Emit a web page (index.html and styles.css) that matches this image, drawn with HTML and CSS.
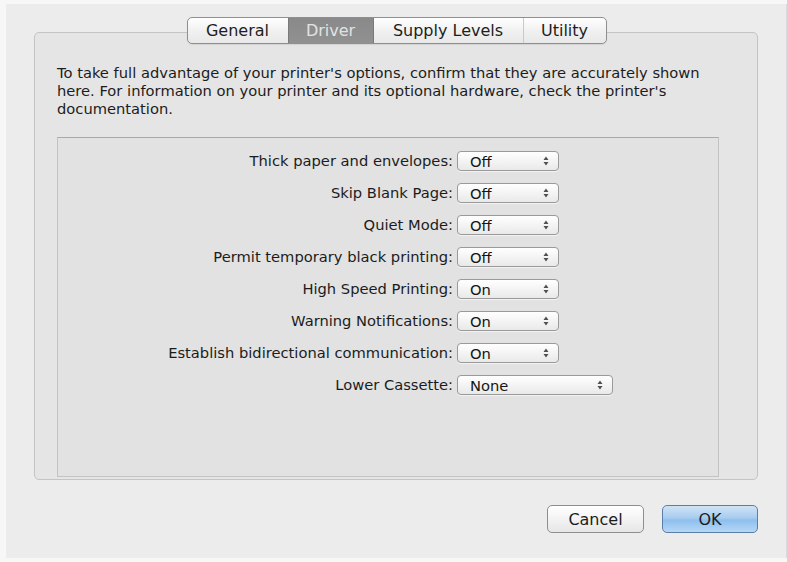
FILE: index.html
```html
<!DOCTYPE html>
<html>
<head>
<meta charset="utf-8">
<link rel="stylesheet" href="styles.css">
</head>
<body>
<div class="window">
  <div class="tabs">
    <div class="tab t-general">General</div>
    <div class="tab t-driver sel">Driver</div>
    <div class="tab t-supply">Supply Levels</div>
    <div class="tab t-utility">Utility</div>
  </div>
  <div class="group">
    <p class="intro">To take full advantage of your printer's options, confirm that they are accurately shown here. For information on your printer and its optional hardware, check the printer's documentation.</p>
    <div class="panel">
      <div class="opts">
        <span class="lbl">Thick paper and envelopes:</span>
        <div class="popup"><span>Off</span><svg width="6" height="10" viewBox="0 0 6 10"><path d="M0.5 4 L3 0.5 L5.5 4 Z M0.5 6 L3 9.5 L5.5 6 Z" fill="#505050"/></svg></div>
        <span class="lbl">Skip Blank Page:</span>
        <div class="popup"><span>Off</span><svg width="6" height="10" viewBox="0 0 6 10"><path d="M0.5 4 L3 0.5 L5.5 4 Z M0.5 6 L3 9.5 L5.5 6 Z" fill="#505050"/></svg></div>
        <span class="lbl">Quiet Mode:</span>
        <div class="popup"><span>Off</span><svg width="6" height="10" viewBox="0 0 6 10"><path d="M0.5 4 L3 0.5 L5.5 4 Z M0.5 6 L3 9.5 L5.5 6 Z" fill="#505050"/></svg></div>
        <span class="lbl">Permit temporary black printing:</span>
        <div class="popup"><span>Off</span><svg width="6" height="10" viewBox="0 0 6 10"><path d="M0.5 4 L3 0.5 L5.5 4 Z M0.5 6 L3 9.5 L5.5 6 Z" fill="#505050"/></svg></div>
        <span class="lbl">High Speed Printing:</span>
        <div class="popup"><span>On</span><svg width="6" height="10" viewBox="0 0 6 10"><path d="M0.5 4 L3 0.5 L5.5 4 Z M0.5 6 L3 9.5 L5.5 6 Z" fill="#505050"/></svg></div>
        <span class="lbl">Warning Notifications:</span>
        <div class="popup"><span>On</span><svg width="6" height="10" viewBox="0 0 6 10"><path d="M0.5 4 L3 0.5 L5.5 4 Z M0.5 6 L3 9.5 L5.5 6 Z" fill="#505050"/></svg></div>
        <span class="lbl">Establish bidirectional communication:</span>
        <div class="popup"><span>On</span><svg width="6" height="10" viewBox="0 0 6 10"><path d="M0.5 4 L3 0.5 L5.5 4 Z M0.5 6 L3 9.5 L5.5 6 Z" fill="#505050"/></svg></div>
        <span class="lbl">Lower Cassette:</span>
        <div class="popup wide"><span>None</span><svg width="6" height="10" viewBox="0 0 6 10"><path d="M0.5 4 L3 0.5 L5.5 4 Z M0.5 6 L3 9.5 L5.5 6 Z" fill="#505050"/></svg></div>
      </div>
    </div>
  </div>
  <div class="buttons">
    <button class="btn cancel">Cancel</button>
    <button class="btn ok">OK</button>
  </div>
</div>
</body>
</html>
```
FILE: styles.css
```css
html, body {
  margin: 0;
  padding: 0;
  background: #f7f7f7;
  font-family: "DejaVu Sans", "Liberation Sans", sans-serif;
  color: #1c1c1c;
}
.window {
  margin: 4px 0 0 6px;
  width: 781px;
  height: 554px;
  box-sizing: border-box;
  background: #ececec;
  border-right: 1px solid #dcdcdc;
  padding: 13px 28px 0 28px;
  display: flex;
  flex-direction: column;
}
.tabs {
  align-self: center;
  position: relative;
  z-index: 1;
  display: flex;
  height: 27px;
  box-sizing: border-box;
  border: 1px solid #8f8f8f;
  border-radius: 5px;
  overflow: hidden;
  background: linear-gradient(#ffffff, #f1f1f1 50%, #e8e8e8);
  box-shadow: 0 1px 1px rgba(0,0,0,0.08);
  margin-left: 1px;
}
.tab {
  font-size: 16px;
  line-height: 25px;
  text-align: center;
  color: #1e1e1e;
  border-left: 1px solid #c9c9c9;
  box-sizing: border-box;
}
.t-general { width: 100px; border-left: none; }
.t-driver { width: 85px; }
.t-supply { width: 150px; }
.t-utility { width: 83px; }
.tab.sel {
  background: linear-gradient(#898989, #919191);
  color: #e2e2e2;
  border-left: 1px solid #7a7a7a;
}
.tab.sel + .tab { border-left: 1px solid #7a7a7a; }
.group {
  margin-top: -12px;
  height: 448px;
  box-sizing: border-box;
  border: 1px solid #c4c4c4;
  border-radius: 5px;
  background: #e5e5e5;
  padding: 31px 38px 0 22px;
}
.intro {
  margin: 0 0 19px 0;
  font-size: 14.7px;
  line-height: 18px;
  color: #1c1c1c;
}
.panel {
  height: 340px;
  box-sizing: border-box;
  border: 1px solid #c3c3c3;
  border-top-color: #a9a9a9;
  background: #e2e2e2;
  padding-top: 13px;
}
.opts {
  display: grid;
  grid-template-columns: 395px auto;
  column-gap: 4px;
  row-gap: 12px;
  align-items: center;
}
.lbl {
  justify-self: end;
  font-size: 14.7px;
  line-height: 20px;
  white-space: nowrap;
}
.popup {
  justify-self: start;
  width: 102px;
  height: 20px;
  box-sizing: border-box;
  border: 1px solid #9a9a9a;
  border-radius: 4px;
  background: linear-gradient(#ffffff, #f4f4f4 50%, #e9e9e9);
  box-shadow: 0 1px 0 rgba(255,255,255,0.6);
  display: flex;
  align-items: center;
  justify-content: space-between;
  padding: 0 9px 0 12px;
  font-size: 14.7px;
  color: #151515;
}
.popup.wide { width: 156px; }
.buttons {
  margin-top: 25px;
  display: flex;
  justify-content: flex-end;
  gap: 18px;
}
.btn {
  font-family: "DejaVu Sans", "Liberation Sans", sans-serif;
  font-size: 16px;
  height: 28px;
  box-sizing: border-box;
  border-radius: 5px;
  padding: 0;
  color: #1c1c1c;
}
.cancel {
  width: 97px;
  border: 1px solid #8e8e8e;
  background: linear-gradient(#ffffff, #f3f3f3 50%, #e6e6e6);
}
.ok {
  width: 96px;
  border: 1px solid #5b7ea9;
  background: linear-gradient(#cfe3f6, #a9cdef 45%, #8ebfee 55%, #b6d8f6);
}
```
